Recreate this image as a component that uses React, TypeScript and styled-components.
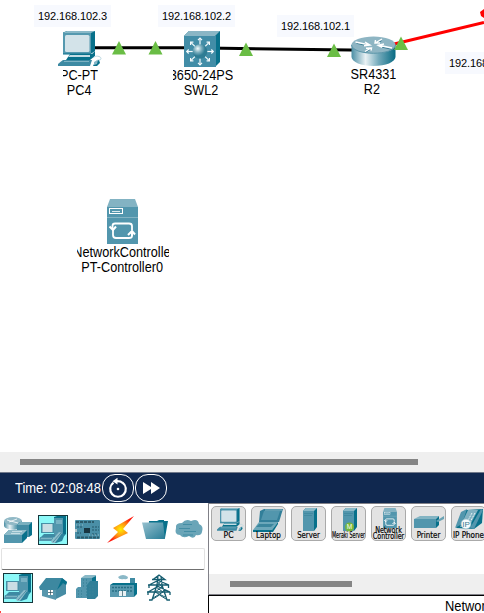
import React from 'react';
import styled, { createGlobalStyle } from 'styled-components';

const Global = createGlobalStyle`
  *{box-sizing:border-box}
  body{margin:0;background:#fff;overflow:hidden;font-family:"Liberation Sans",Arial,sans-serif;color:#000}
  svg{display:block}
`;
const Window = styled.div`width:484px;height:613px;display:flex;flex-direction:column;overflow:hidden;`;
const Canvas = styled.div`position:relative;height:452px;flex:none;overflow:hidden;background:#fff;`;
const Links = styled.svg`position:absolute;inset:0;`;
const Ip = styled.div<{ $x: number; $y: number }>`
  position:absolute;left:${p => p.$x}px;top:${p => p.$y}px;width:77px;height:22px;
  background:#f7f9fe;font-size:11px;line-height:23px;text-align:center;letter-spacing:-.12px;white-space:nowrap;
`;
const Node = styled.div<{ $x: number; $y: number; $w: number; $gap?: number }>`
  position:absolute;left:${p => p.$x}px;top:${p => p.$y}px;width:${p => p.$w}px;
  display:flex;flex-direction:column;align-items:center;
  svg{margin-bottom:${p => p.$gap ?? 0}px;}
`;
const Caption = styled.div<{ $w: number; $shift?: number }>`
  width:${p => p.$w}px;height:15px;overflow:hidden;display:flex;justify-content:center;
  font-size:14px;line-height:15px;white-space:nowrap;
  span{flex:none;transform:translateX(${p => p.$shift ?? 0}px) scaleX(.905);}
`;
const Track = styled.div<{ $pad: number }>`
  height:20px;flex:none;background:#efefef;display:flex;align-items:center;padding-left:${p => p.$pad}px;
`;
const Thumb = styled.div<{ $w: number }>`width:${p => p.$w}px;height:6px;background:#858585;`;
const TimeBar = styled.div`
  height:31px;flex:none;background:#10284f;border-top:1px solid #71798a;color:#fff;
  display:flex;align-items:center;padding-left:15px;
`;
const Time = styled.div`width:87px;font-size:14px;white-space:nowrap;transform:scaleX(.925);transform-origin:0 50%;`;
const RoundButton = styled.button`
  width:32px;height:28px;margin-right:1px;padding:0;border:1px solid #fff;border-radius:13px;background:transparent;
  display:flex;align-items:center;justify-content:center;
`;
const Bottom = styled.div`flex:1;display:flex;min-height:0;`;
const Left = styled.div`width:208px;flex:none;padding-top:12px;position:relative;`;
const IconRow = styled.div<{ $gap: number }>`
  height:30px;display:flex;gap:${p => p.$gap}px;padding-left:${p => 8 - p.$gap}px;
`;
const Cell = styled.div<{ $on?: boolean }>`
  width:30px;height:30px;flex:none;
  background:${p => (p.$on ? '#8cf8f8' : 'transparent')};
  outline:${p => (p.$on ? '1px solid #15363b' : 'none')};outline-offset:-1px;
`;
const Field = styled.div`
  width:204px;height:22px;margin:3px 0 3px 1px;border:1px solid #e2e2e2;border-bottom-color:#707070;border-radius:2px;background:#fff;
`;
const Corner = styled.i`position:absolute;left:0;bottom:0;width:1px;height:2px;background:#ff4141;`;
const Right = styled.div`flex:1;min-width:0;display:flex;flex-direction:column;`;
const Devices = styled.div`
  height:92px;flex:none;border:1px solid #808087;border-right:0;
  display:flex;flex-direction:column;overflow:hidden;
`;
const DeviceRow = styled.div`height:70px;flex:none;display:flex;gap:5px;padding:2px 0 0 2px;`;
const Device = styled.div`
  width:35px;height:35px;flex:none;border:1px solid #aaa;border-radius:5px;background:#e3e3e3;position:relative;overflow:hidden;
`;
const DeviceName = styled.div<{ $scale: number; $two?: boolean }>`
  position:absolute;left:-20px;right:-20px;bottom:${p => (p.$two ? 1 : 0)}px;text-align:center;white-space:pre;
  font:9px/${p => (p.$two ? 6 : 9)}px "DejaVu Sans",sans-serif;transform:scaleX(${p => p.$scale});color:#000;
  -webkit-text-stroke:.2px #000;
`;
const Status = styled.div`
  flex:1;border-top:1px solid #000;border-left:1px solid #000;padding:2px 0 0 236px;font-size:14px;line-height:17px;white-space:nowrap;
  overflow:hidden;
  span{display:inline-block;transform:scaleX(.92);transform-origin:0 50%;}
`;
const HiddenDefs = styled.svg`position:absolute;`;

const T = '#5296ad';
const D = '#08718b';
const M = '#3d8aa3';

const Defs = () => (
  <HiddenDefs width="0" height="0">
    <defs>
      <linearGradient id="metal"><stop offset="0" stopColor="#4a8ea4" /><stop offset=".32" stopColor="#e9f1f4" /><stop offset=".62" stopColor="#72a9ba" /><stop offset="1" stopColor="#086b84" /></linearGradient>
      <linearGradient id="side" x1="0" x2="1" y1="0" y2="1"><stop offset="0" stopColor="#96c0ce" /><stop offset="1" stopColor="#287d97" /></linearGradient>
      <radialGradient id="ball" cx=".35" cy=".3"><stop offset="0" stopColor="#f4fafc" /><stop offset=".55" stopColor="#78acbc" /><stop offset="1" stopColor="#2e7c94" /></radialGradient>
      <radialGradient id="bolt"><stop offset="0" stopColor="#fff000" /><stop offset=".5" stopColor="#ff9414" /><stop offset="1" stopColor="#ff190c" /></radialGradient>
    </defs>
  </HiddenDefs>
);

const PcArt = () => (
  <>
    <path d="M5 1.5 9 0H37V20L32 23.5H5Z" fill={D} />
    <path d="M5 2 9 0H37L33 2Z" fill="#8ab9c8" />
    <path d="M5 2H33V22.5H5Z" fill="#5599af" />
    <rect x="7" y="4" width="24.5" height="17" rx="1.5" fill="#d3e3e9" />
    <path d="M10 26 12 23H34L37 20V25L32 29H8Z" fill={D} />
    <path d="M12 24H32V26H10Z" fill="#c3dce4" />
    <path d="M3 30.5 5 29H34L32 35H0V33Z" fill={M} />
    <path d="M6 30.5H31" stroke="#8dbdcb" strokeWidth=".8" fill="none" />
    <path d="M35 27C37 24 43 25 43 27.5C43 30 40 28 38 30" stroke="#b4d3dc" strokeWidth=".9" fill="none" />
    <path d="M37 31 41 29 42 32 39 35H35Z" fill={D} /><path d="M36 31 40 29 39 33 36 34Z" fill="#85b7c8" />
  </>
);

const SwitchArt = () => (
  <svg width="37" height="37">
    <path d="M0 5 5 0H36V31L31 36H0Z" fill={D} />
    <path d="M0 5 5 0H36L31 5Z" fill="#8ab6c5" />
    <rect y="5" width="32" height="31" fill="#428da7" />
    {[0, 45, 90, 135, 180, 225, 270, 315].map(a => (
      <g key={a} transform={`rotate(${a} 16 20.5)`} stroke="#f5fbfd" fill="none" strokeWidth="1.2">
        <path d="M16 14V7.5" /><path d="M14 9.2 16 7.2 18 9.2" />
      </g>
    ))}
    <circle cx="16" cy="20.5" r="7.3" fill="url(#ball)" />
  </svg>
);

const RouterArt = () => (
  <svg width="45" height="31">
    <path d="M.5 8.5V21C1 26 10 30 22.5 30S44 26 44.5 21V8.5Z" fill="url(#metal)" />
    <ellipse cx="22.5" cy="9" rx="22" ry="8.5" fill="#8eb5c3" />
    <path d="M.5 9C2 20 43 20 44.5 9" fill="none" stroke="#5b96aa" />
    <g transform="translate(.5 .8)" stroke="#3d7e95" strokeWidth="1" fill="none">
      <path d="M5 6.5 16 9M40 12.5 29 10M30 4 25 7M14 15.5 19 12.5" />
    </g>
    <g stroke="#fff" strokeWidth="1.4" fill="none">
      <path d="M4.5 6 17 8.6M14 6 19 9 13 9.8" />
      <path d="M41 12 29 9.5M33 8 27 9.2 31 11.5" />
      <path d="M31 3 25 6.5M24.5 4 24 7 29 7" />
      <path d="M14 15.5 20 12M15 12.3 20.5 12 20 14.5" />
    </g>
  </svg>
);

const ControllerArt = ({ w = 31, h = 45 }: { w?: number; h?: number }) => (
  <svg width={w} height={h} viewBox="0 0 31 45">
    <path d="M0 8 3 0H28L31 8Z" fill="#83b3c3" /><rect y="8" width="31" height="37" fill={T} />
    <path d="M0 18.5H31" stroke="#83b3c3" />
    <g fill="none" stroke="#fff"><rect x="2.5" y="9.5" width="13" height="5" /><path d="M5 12.5H13" strokeWidth=".8" />
      <path d="M5.5 30V27Q5.5 24.5 8 24.5H22Q25 24.5 25 27V31M25 37Q25 39 22 39H9Q6 39 6 36V30" strokeWidth="1.8" />
      <path d="M2.5 27.5 6 31 9 27.5M21 36 25 32 28 35.5M25 32V37" strokeWidth="2" /></g>
  </svg>
);

const EndDevices = () => (
  <svg width="30" height="30">
    <path d="M16 2 19 1H28V19L26 21H16Z" fill={D} /><path d="M16 3H25V23H16Z" fill={T} /><path d="M18 6H24M18 8H24" stroke="#b1dbe4" strokeWidth=".8" />
    <path d="M3 8H16V18H3Z" fill="#4790a7" /><rect x="4.5" y="9" width="10" height="8" fill="#cadde4" />
    <path d="M6 19H16L18 22H3Z" fill={M} /><path d="M2 22H16L14 26H1Z" fill={T} /><path d="M3 23.5H14" stroke="#7db5c5" />
    <path d="M15 28 21 18 27 19 24 26 18 28Z" fill="#2c839d" /><path d="M13 26 21 17 24 18 17 28 14 28Z" fill="#8fbecc" /><path d="M15 27 23 18" stroke="#4a8da3" />
  </svg>
);
const NetDevices = () => (
  <svg width="30" height="30">
    <path d="M0 6V11C2 16 16 16 18 11V6Z" fill="url(#metal)" /><ellipse cx="9" cy="6" rx="9" ry="4" fill="#91b9c6" /><path d="M3 5 14 8M13 4 5 7" stroke="#fff" strokeWidth=".8" />
    <path d="M13 10 16 7H28V20L25 22H13Z" fill={D} /><path d="M13 10 16 7H28L25 10Z" fill="#79afbf" /><path d="M13 10H25V22H13Z" fill="#438ca4" />
    <path d="M0 20 5 15H23V23L18 28H0Z" fill={D} /><path d="M0 20 5 15H23L18 20Z" fill="#8dbac8" /><path d="M0 20H18V28H0Z" fill={T} />
    <path d="M7 18.5H16M8 16.5H18" stroke="#d4e7ec" strokeWidth=".8" />
  </svg>
);
const Board = () => (
  <svg width="30" height="30"><rect x="3" y="5" width="25" height="19" rx="1" fill="#4a8fa7" /><rect x="12" y="13" width="6" height="5" fill="#193642" />
    <path d="M4 7H22M5 22.5H27" stroke="#2b5b6b" strokeWidth="2" strokeDasharray="3 1" /><path d="M5 12H10M20 12H27M20 15H27M5 18H9M20 19H25" stroke="#235768" strokeWidth="1.2" strokeDasharray="2 1" /><path d="M4 10H12M17 20H27" stroke="#b7d2d9" strokeWidth=".7" strokeDasharray="1 2" /><rect x="3" y="14" width="2" height="3" fill="#b2c7cc" /></svg>
);
const Bolt = () => <svg width="30" height="30"><path d="M28 1 7 13 12 17 1 28 22 18 17 14Z" fill="url(#bolt)" /></svg>;
const Folder = () => <svg width="30" height="30"><path d="M9 6H17L19 5H24V6H28L25 23L22 24H8Z" fill={D} /><path d="M2 7.5H23L25 24H6Z" fill="url(#side)" /></svg>;
const Cloud = () => <svg width="30" height="30"><path d="M2 13Q1 8 8 8Q12 3 17 6Q24 3 25 9Q30 11 28 17Q27 21 22 20Q20 25 15 21Q9 24 6 20Q0 20 2 13Z" fill="#6aa5b8" /><path d="M9 9.5H18M5 13.5H16M10 16.5H22M9 20H19" stroke="#438da4" strokeWidth="1.2" /></svg>;
const House = () => (
  <svg width="30" height="30"><path d="M4 14H18V27L4 23Z" fill="#5897ad" /><path d="M18 15 25 6 28 12V21L18 26Z" fill="#468ca4" /><path d="M1 14 8 5H24L29 9 28 12 26 11 18 17H2Z" fill="#3d88a0" /><path d="M24 5 29 9 28 12 25 10 19 17Z" fill={D} />
    <path d="M10 17H15V22H10Z" fill="#fff" /><path d="M12.5 17V22M10 19.5H15" stroke="#264b57" strokeWidth=".7" /></svg>
);
const City = () => (
  <svg width="30" height="30"><path d="M8 5 12 2H23V25H8Z" fill="#8ab9c7" /><path d="M19 5 23 3V25H19Z" fill={D} /><path d="M8 5H19V25H8Z" fill={T} /><path d="M3 16 5 14H13V25H3Z" fill={T} /><path d="M14 12 17 8H25V23L22 26H14Z" fill="#307f98" /><path d="M10.5 6V15M13.5 6V23M17 12V24M20 12V24M5.5 17V24M8.5 17V24" stroke="#3d849b" strokeWidth=".8" strokeDasharray="2 1" /></svg>
);
const Factory = () => (
  <svg width="30" height="30"><path d="M10 4Q15 0 20 4Q20 7 16 6Q11 7 10 4Z" fill="#8ab8c7" /><path d="M22 5H27V13H22Z" fill="#408ba3" /><path d="M2 12 5 10H29V21L26 24H2Z" fill={D} /><path d="M2 12H26V24H2Z" fill="#5799af" />
    <path d="M4 14.5H25M4 18H25" stroke="#286f85" strokeWidth="1.5" strokeDasharray="2 1" /><rect x="11" y="18" width="7" height="5" fill="#e8f1f4" /><path d="M14.5 18V23" stroke="#426975" strokeWidth=".8" /></svg>
);
const Tower = () => (
  <svg width="30" height="30"><g transform="translate(1 0)" fill="none" stroke="#155d70" strokeWidth="1.3"><path d="M9 6.5 15 2 21 6.5H8M5 12 14 7.5 25 12H4M4 19 14 13.5 26 19H3M14 3 13 12 8 27H5M17 3 18 12 23 27H26" /><path d="M13 8 18 14 11 19 21 24M17 8 12 14 19 19 9 25M9 26 15.5 22 22 26" strokeWidth="1" /><path d="M5 12V15M24.500 12V15M4 19V22M26 19V22" /></g></svg>
);

const ServerArt = () => <><path d="M11 4 14 1H25V20L22 24H11Z" fill={D} /><path d="M11 4 14 1H25L22 4Z" fill="#8ab9c8" /><path d="M11 4H22V24H11Z" fill={T} /><path d="M12 6.5H21M12 8.5H20" stroke="#3d859c" strokeWidth=".7" /></>;
const LaptopArt = () => <><path d="M8 4 12 2H31L27 15H7Z" fill="#327f99" /><path d="M12 4H28L25 13H9Z" fill={T} /><path d="M13 3H30" stroke="#8dbbc9" /><path d="M7 15H26L20 23H1Z" fill="#6ca8ba" /><path d="M7 17H22L19 20H4Z" fill="#3b869d" /><path d="M26 15V17L21 25H1V23H20Z" fill={D} /></>;
const PrinterArt = () => <><path d="M2 12 8 9H27L24 12Z" fill="#83b4c3" /><path d="M2 12H24V21H2Z" fill={T} /><path d="M24 12 27 9V18L24 21Z" fill={D} /><path d="M24 14 32 9V12L26 15Z" fill="#6aa3b4" /></>;
const PhoneArt = () => <><path d="M4 21 14 3 31 2 30 16 22 22Z" fill={D} /><path d="M9 5 15 2 10 17 3 21Z" fill={T} /><path d="M16 3H26L17 20H8Z" fill="#82b2c2" /><path d="M20 6 14 17M23 6 17 17" stroke="#e8f5f7" strokeDasharray="2 1" /><path d="M29 2 31 3 22 22 18 21Z" fill={T} /><circle cx="14" cy="17" r="5" fill="#f8fbfc" stroke="#85b5c3" strokeWidth=".7" /><text x="14" y="19.8" textAnchor="middle" fontSize="8" fill="#387c91">IP</text></>;

const devices: { name: string; scale: number; art: React.ReactNode; two?: boolean }[] = [
  { name: 'PC', scale: .85, art: <g transform="translate(5 1) scale(.61 .65)"><PcArt /></g> },
  { name: 'Laptop', scale: .8, art: <LaptopArt /> },
  { name: 'Server', scale: .77, art: <ServerArt /> },
  { name: 'Meraki Server', scale: .53, art: <><ServerArt /><circle cx="17.5" cy="20" r="4.5" fill="#76b738" /><text x="17.5" y="22.4" textAnchor="middle" fontSize="6.5" fill="#fff">M</text></> },
  { name: 'Network\nController', scale: .71, two: true, art: <svg x="11" y="1" width="14" height="20"><ControllerArt w={14} h={20} /></svg> },
  { name: 'Printer', scale: .79, art: <PrinterArt /> },
  { name: 'IP Phone', scale: .8, art: <PhoneArt /> },
];

const lights = [[119, 47.5], [155.5, 47.5], [246, 49], [334, 50], [401, 43]];

export default function App() {
  return (
    <Window>
      <Global />
      <Defs />
      <Canvas>
        <Links width="484" height="120">
          <path d="M90 47.8H190L370 50.2" stroke="#000" strokeWidth="3" fill="none" />
          <path d="M390 45 484 22.5" stroke="#f00" strokeWidth="3" />
          <path d="M484 9 480 12 481 16 484 18Z" fill="#f00" />
        </Links>
        <Ip $x={34} $y={5}>192.168.102.3</Ip>
        <Ip $x={158} $y={5}>192.168.102.2</Ip>
        <Ip $x={277} $y={15}>192.168.102.1</Ip>
        <Ip $x={445} $y={52}>192.168.102.4</Ip>
        <Node $x={58} $y={31} $w={44}>
          <svg width="44" height="37"><PcArt /></svg>
          <Caption $w={35} $shift={-1}><span>PC-PT</span></Caption>
          <Caption $w={44} $shift={-0.5}><span>PC4</span></Caption>
        </Node>
        <Node $x={172} $y={31} $w={61}>
          <SwitchArt />
          <Caption $w={60} $shift={-0.5}><span>3650-24PS</span></Caption>
          <Caption $w={60} $shift={-1}><span>SWL2</span></Caption>
        </Node>
        <Node $x={350} $y={36} $w={46}>
          <RouterArt />
          <Caption $w={45} $shift={-1.5}><span>ISR4331</span></Caption>
          <Caption $w={46} $shift={-1}><span>R2</span></Caption>
        </Node>
        <Node $x={77} $y={199} $w={91} $gap={1}>
          <ControllerArt />
          <Caption $w={92} $shift={2}><span>NetworkController</span></Caption>
          <Caption $w={92}><span>PT-Controller0</span></Caption>
        </Node>
        <Links width="484" height="120">
          {lights.map(([x, y]) => <path key={x} d={`M${x} ${y - 6.5}l7 13.5h-14Z`} fill="#6abd45" />)}
        </Links>
      </Canvas>
      <Track $pad={20}><Thumb $w={398} /></Track>
      <TimeBar>
        <Time>Time: 02:08:48</Time>
        <RoundButton>
          <svg width="22" height="22" fill="none" stroke="#fff" strokeWidth="2.2"><path d="M6.5 5.6A7.8 7.8 0 1 0 15.5 5.6" /><path d="M15.8 6Q14 4.2 10 4.2" /><path d="M10.5 .8V7.6L5.5 4.2Z" fill="#fff" stroke="none" /><circle cx="11" cy="12" r="1.3" fill="#fff" stroke="none" /></svg>
        </RoundButton>
        <RoundButton>
          <svg width="20" height="14" fill="#fff"><path d="M2 1 10 6V1L19 7 10 13V8L2 13Z" /></svg>
        </RoundButton>
      </TimeBar>
      <Bottom>
        <Left>
          <IconRow $gap={4}>
            <Cell><NetDevices /></Cell><Cell $on><EndDevices /></Cell><Cell><Board /></Cell>
            <Cell><Bolt /></Cell><Cell><Folder /></Cell><Cell><Cloud /></Cell>
          </IconRow>
          <Field />
          <IconRow $gap={5}>
            <Cell $on><EndDevices /></Cell><Cell><House /></Cell><Cell><City /></Cell><Cell><Factory /></Cell><Cell><Tower /></Cell>
          </IconRow>
          <Corner />
        </Left>
        <Right>
          <Devices>
            <DeviceRow>
              {devices.map(d => (
                <Device key={d.name}>
                  <svg width="33" height="33">{d.art}</svg>
                  <DeviceName $scale={d.scale} $two={d.two}>{d.name}</DeviceName>
                </Device>
              ))}
            </DeviceRow>
            <Track $pad={21}><Thumb $w={122} /></Track>
          </Devices>
          <Status><span>Network Controller</span></Status>
        </Right>
      </Bottom>
    </Window>
  );
}
